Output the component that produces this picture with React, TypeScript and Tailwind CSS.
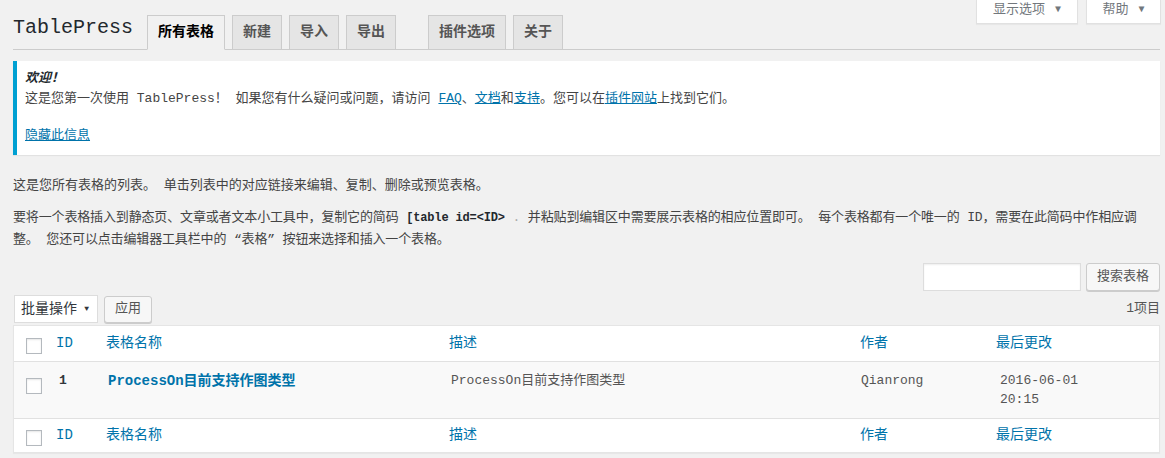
import React from 'react'

const tabs = [
  { label: '所有表格', active: true },
  { label: '新建' },
  { label: '导入' },
  { label: '导出', gapAfter: true },
  { label: '插件选项' },
  { label: '关于' },
]

const cols = 'grid grid-cols-[42px_50px_343px_411px_136px_1fr]'

function Checkbox() {
  return <span className="block w-[16px] h-[16px] border border-[#b4b9be] bg-white shadow-[inset_0_1px_2px_rgba(0,0,0,0.1)]" />
}

function HeadRow({ top }: { top?: boolean }) {
  return (
    <div className={`${cols} items-center text-[14px] text-[#0073aa] ${top ? 'h-[36px] border-b border-[#e1e1e1]' : 'h-[34px] border-t border-[#e1e1e1]'}`}>
      <div className="pl-[12px] pt-[4px]"><Checkbox /></div>
      <div>ID</div>
      <div>表格名称</div>
      <div>描述</div>
      <div>作者</div>
      <div>最后更改</div>
    </div>
  )
}

export default function App() {
  return (
    <div className="relative min-h-[458px] bg-[#f1f1f1] text-[13px] text-[#444] font-['Liberation_Mono','Noto_Sans_CJK_SC',monospace] pl-[13px] pr-[5px]">
      {/* screen meta toggles */}
      <div className="absolute top-0 right-[4px] flex gap-[8px] text-[13px] text-[#72777c]">
        <div className="h-[24px] w-[102px] bg-white border border-t-0 border-[#e1e1e1] shadow-[0_1px_1px_rgba(0,0,0,0.04)] flex items-start justify-center gap-[10px] leading-[20px]">
          <span>显示选项</span><span className="text-[10px] text-[#72777c]">▼</span>
        </div>
        <div className="h-[24px] w-[75px] bg-white border border-t-0 border-[#e1e1e1] shadow-[0_1px_1px_rgba(0,0,0,0.04)] flex items-start justify-center gap-[10px] leading-[20px]">
          <span>帮助</span><span className="text-[10px] text-[#72777c]">▼</span>
        </div>
      </div>

      {/* nav tabs */}
      <div className="pt-[15px] flex items-end border-b border-[#ccc]">
        <div className="w-[134px] pb-[8px] text-[20px] leading-[26px] text-[#23282d]">TablePress</div>
        <div className="flex gap-[7px]">
          {tabs.map(t => (
            <div
              key={t.label}
              className={`h-[35px] px-[10px] flex items-center text-[14px] font-bold border border-[#ccc] -mb-px ${t.active ? 'bg-[#f1f1f1] text-black border-b-[#f1f1f1]' : 'bg-[#e5e5e5] text-[#555]'} ${t.gapAfter ? 'mr-[25px]' : ''}`}
            >
              {t.label}
            </div>
          ))}
        </div>
      </div>

      {/* welcome notice */}
      <div className="mt-[11px] bg-white border-l-4 border-[#00a0d2] shadow-[0_1px_1px_rgba(0,0,0,0.06)] pl-[8px] pt-[8px] pb-[9px] leading-[20px]">
        <p>
          <strong className="italic text-[#23282d]">欢迎！</strong><br />
          这是您第一次使用 TablePress！ 如果您有什么疑问或问题，请访问 <a className="text-[#0073aa] underline">FAQ</a>、<a className="text-[#0073aa] underline">文档</a>和<a className="text-[#0073aa] underline">支持</a>。您可以在<a className="text-[#0073aa] underline">插件网站</a>上找到它们。
        </p>
        <p className="mt-[17px]"><a className="text-[#0073aa] underline">隐藏此信息</a></p>
      </div>

      <p className="mt-[21px] leading-[20px]">这是您所有表格的列表。 单击列表中的对应链接来编辑、复制、删除或预览表格。</p>
      <p className="mt-[11px] leading-[21px] tracking-[-0.15px]">
        要将一个表格插入到静态页、文章或者文本小工具中，复制它的简码 <code className="font-bold text-[12px] text-[#23282d]">[table id=&lt;ID&gt;</code> <span className="text-[#aaa]">.</span> 并粘贴到编辑区中需要展示表格的相应位置即可。 每个表格都有一个唯一的 ID，需要在此简码中作相应调<br />整。 您还可以点击编辑器工具栏中的 “表格” 按钮来选择和插入一个表格。
      </p>

      {/* search */}
      <div className="mt-[13px] flex justify-end gap-[5px]">
        <div className="w-[158px] h-[28px] bg-white border border-[#ddd] shadow-[inset_0_1px_2px_rgba(0,0,0,0.07)]" />
        <div className="w-[74px] h-[28px] bg-[#f7f7f7] border border-[#ccc] rounded-[3px] shadow-[0_1px_0_#ccc] flex items-center justify-center text-[#555]">搜索表格</div>
      </div>

      {/* bulk actions */}
      <div className="mt-[4px] flex items-center">
        <div className="ml-[1px] w-[84px] h-[28px] bg-white border border-[#ddd] flex items-center justify-between pl-[6px] pr-[8px] text-[14px] text-[#32373c]">
          <span>批量操作</span><span className="text-[8px]">▼</span>
        </div>
        <div className="ml-[6px] w-[48px] h-[27px] bg-[#f7f7f7] border border-[#ccc] rounded-[3px] shadow-[0_1px_0_#ccc] flex items-center justify-center text-[#555]">应用</div>
        <div className="ml-auto text-[#555]">1项目</div>
      </div>

      {/* table */}
      <div className="mt-[2px] bg-white border border-[#e5e5e5] shadow-[0_1px_1px_rgba(0,0,0,0.04)]">
        <HeadRow top />
        <div className={`${cols} h-[56px] bg-[#f9f9f9] items-start`}>
          <div className="pl-[12px] pt-[16px]"><Checkbox /></div>
          <div className="pl-[3px] pt-[9px] leading-[20px] font-bold text-[#32373c]">1</div>
          <div className="pl-[2px] pt-[9px] leading-[20px] font-bold text-[14px] text-[#0073aa]">ProcessOn目前支持作图类型</div>
          <div className="pl-[2px] pt-[9px] leading-[20px] text-[#555]">ProcessOn目前支持作图类型</div>
          <div className="pl-[1px] pt-[9px] leading-[20px] text-[#555]">Qianrong</div>
          <div className="pl-[4px] pt-[9px] leading-[19px] text-[#555]">2016-06-01<br />20:15</div>
        </div>
        <HeadRow />
      </div>
    </div>
  )
}
